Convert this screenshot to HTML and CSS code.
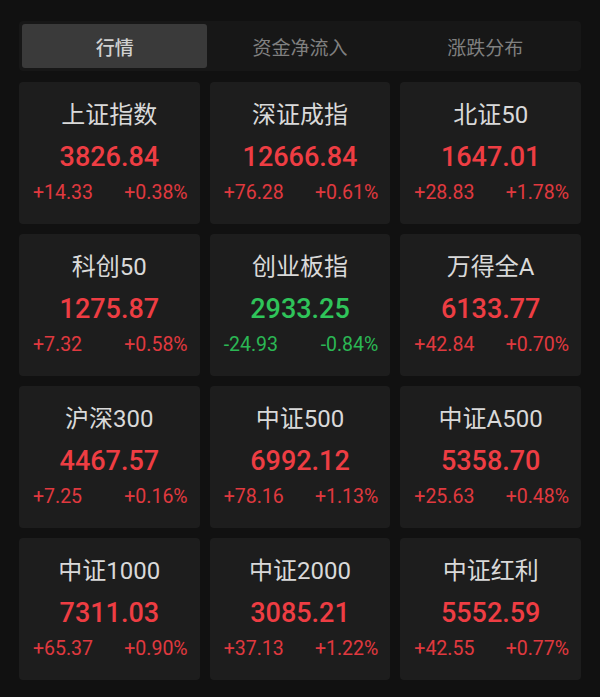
FILE: index.html
```html
<!DOCTYPE html>
<html lang="zh">
<head>
<meta charset="utf-8">
<link rel="stylesheet" href="styles.css">
</head>
<body>
<div class="page">
  <div class="tabs">
    <div class="tab active">行情</div>
    <div class="tab">资金净流入</div>
    <div class="tab">涨跌分布</div>
  </div>
  <div class="grid">
    <div class="card up"><div class="name">上证指数</div><div class="val">3826.84</div><div class="chg"><span>+14.33</span><span>+0.38%</span></div></div>
    <div class="card up"><div class="name">深证成指</div><div class="val">12666.84</div><div class="chg"><span>+76.28</span><span>+0.61%</span></div></div>
    <div class="card up"><div class="name">北证50</div><div class="val">1647.01</div><div class="chg"><span>+28.83</span><span>+1.78%</span></div></div>
    <div class="card up"><div class="name">科创50</div><div class="val">1275.87</div><div class="chg"><span>+7.32</span><span>+0.58%</span></div></div>
    <div class="card down"><div class="name">创业板指</div><div class="val">2933.25</div><div class="chg"><span>-24.93</span><span>-0.84%</span></div></div>
    <div class="card up"><div class="name">万得全A</div><div class="val">6133.77</div><div class="chg"><span>+42.84</span><span>+0.70%</span></div></div>
    <div class="card up"><div class="name">沪深300</div><div class="val">4467.57</div><div class="chg"><span>+7.25</span><span>+0.16%</span></div></div>
    <div class="card up"><div class="name">中证500</div><div class="val">6992.12</div><div class="chg"><span>+78.16</span><span>+1.13%</span></div></div>
    <div class="card up"><div class="name">中证A500</div><div class="val">5358.70</div><div class="chg"><span>+25.63</span><span>+0.48%</span></div></div>
    <div class="card up"><div class="name">中证1000</div><div class="val">7311.03</div><div class="chg"><span>+65.37</span><span>+0.90%</span></div></div>
    <div class="card up"><div class="name">中证2000</div><div class="val">3085.21</div><div class="chg"><span>+37.13</span><span>+1.22%</span></div></div>
    <div class="card up"><div class="name">中证红利</div><div class="val">5552.59</div><div class="chg"><span>+42.55</span><span>+0.77%</span></div></div>
  </div>
</div>
</body>
</html>
```

FILE: styles.css
```css
html, body {
  margin: 0;
  padding: 0;
  background: #111111;
}
.page {
  width: 600px;
  height: 697px;
  box-sizing: border-box;
  padding: 21px 19px 0 19px;
  font-family: Roboto, "Noto Sans CJK SC", sans-serif;
}
.tabs {
  display: grid;
  grid-template-columns: 1fr 1fr 1fr;
  background: #171717;
  border-radius: 4px;
  padding: 3px;
  height: 50px;
  box-sizing: border-box;
}
.tab {
  display: flex;
  align-items: center;
  justify-content: center;
  font-family: "Noto Sans CJK SC", sans-serif;
  font-size: 19px;
  color: #808080;
  border-radius: 3px;
}
.tab.active {
  background: #3a3a3a;
  color: #d0d0d0;
  font-weight: 500;
}
.grid {
  margin-top: 11px;
  display: grid;
  grid-template-columns: 1fr 1fr 1fr;
  grid-auto-rows: 142px;
  gap: 10px;
}
.card {
  background: #1d1d1d;
  border-radius: 4px;
  display: flex;
  flex-direction: column;
  align-items: center;
}
.name {
  margin-top: 18px;
  height: 30px;
  line-height: 30px;
  font-size: 24px;
  color: #d9d9d9;
}
.val {
  margin-top: 10px;
  height: 34px;
  line-height: 34px;
  font-size: 27px;
  font-weight: 500;
}
.chg {
  margin-top: 7px;
  height: 24px;
  line-height: 24px;
  align-self: stretch;
  display: flex;
  justify-content: space-between;
  padding: 0 12px 0 14px;
  font-size: 19.5px;
}
.up .val { color: #ee3d43; }
.down .val { color: #2fc45a; }
.up .chg { color: #e0393f; }
.down .chg { color: #2bb754; }
```
